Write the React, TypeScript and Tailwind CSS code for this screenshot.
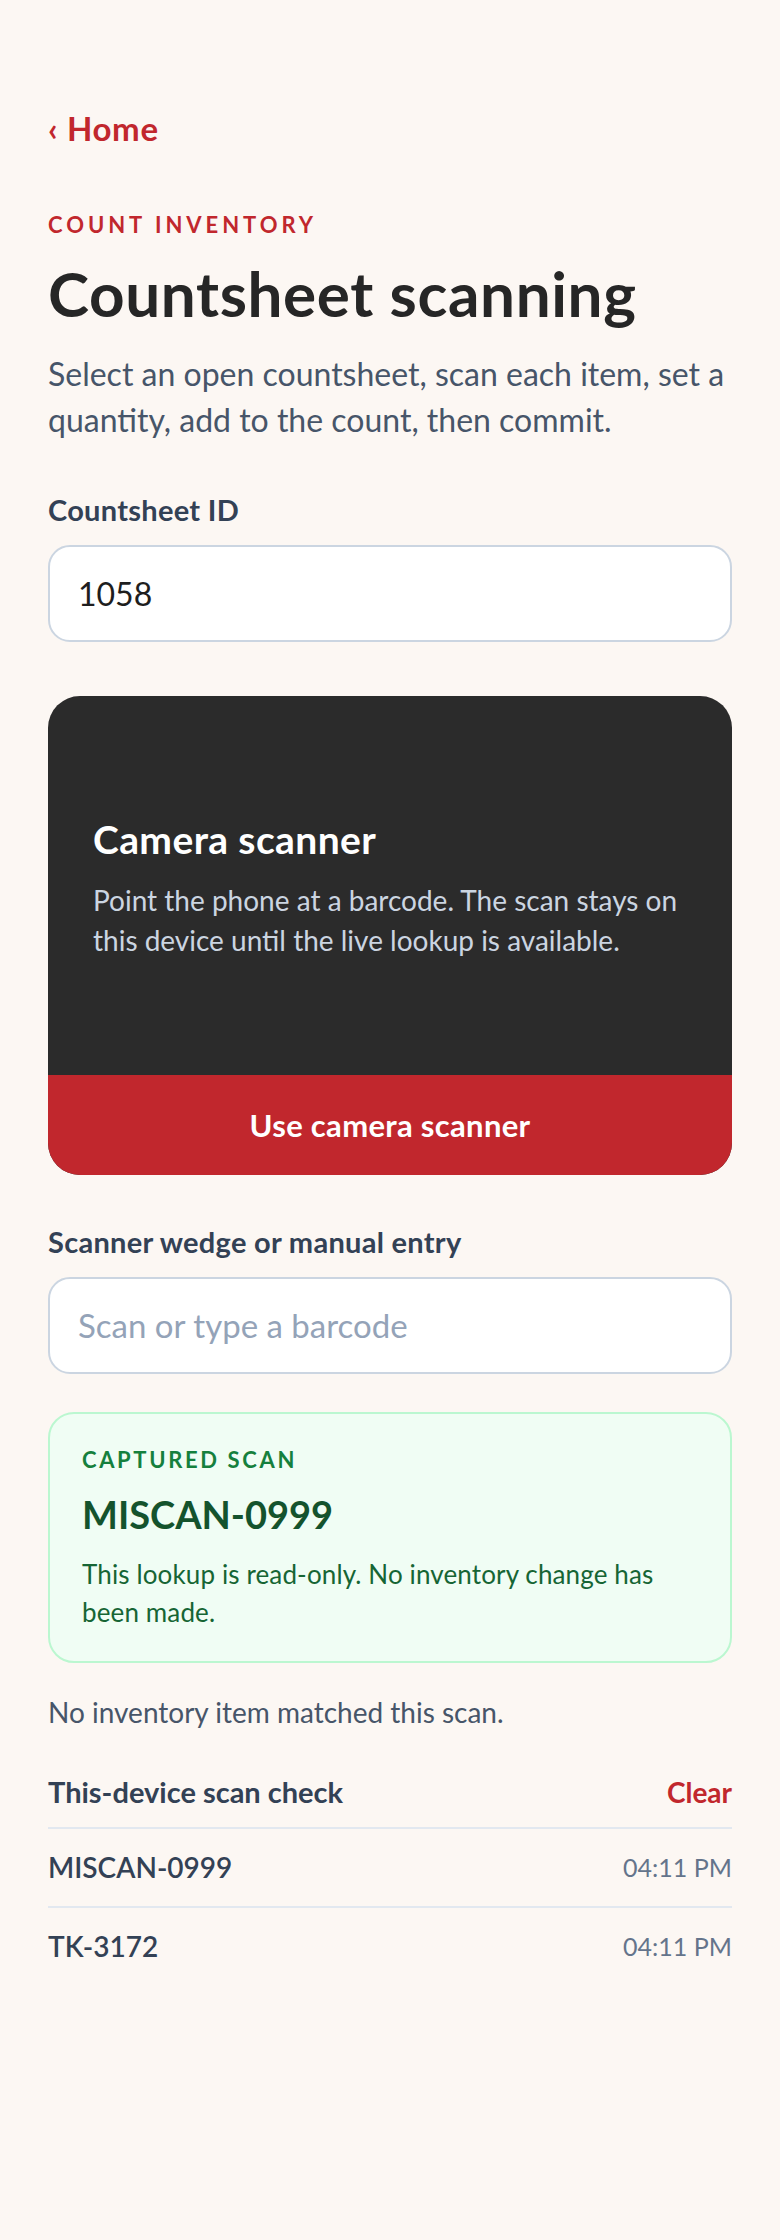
export default function App() {
  return (
    <div className="min-h-[2240px] bg-[#fcf7f3] px-[48px] pt-[106px] font-['Lato',sans-serif]">
      <a className="block text-[33px] leading-[44px] font-bold tracking-[0.02em] text-[#c1272d]">‹ Home</a>

      <div className="mt-[59px] text-[22px] leading-[32px] font-bold tracking-[0.18em] text-[#c1272d]">COUNT INVENTORY</div>
      <h1 className="mt-[16px] text-[62px] leading-[72px] font-bold tracking-[0.01em] text-[#262626]">Countsheet scanning</h1>
      <p className="mt-[22px] text-[32px] leading-[46px] text-[#475569]">
        Select an open countsheet, scan each item, set a quantity, add to the count, then commit.
      </p>

      <label className="mt-[47px] block text-[29px] leading-[40px] font-bold tracking-[0.01em] text-[#334155]">Countsheet ID</label>
      <div className="mt-[15px] flex h-[97px] items-center rounded-[22px] border-2 border-[#cbd5e1] bg-white px-[28px] text-[32px] text-[#1e1e1e]">
        1058
      </div>

      <div className="mt-[54px] overflow-hidden rounded-[32px] bg-[#2b2b2b]">
        <div className="h-[379px] px-[45px] pt-[119px]">
          <div className="text-[39px] leading-[48px] font-bold tracking-[0.01em] text-white">Camera scanner</div>
          <p className="mt-[17px] text-[28px] leading-[40px] text-[#cbd5e1]">
            Point the phone at a barcode. The scan stays on this device until the live lookup is available.
          </p>
        </div>
        <div className="flex h-[100px] items-center justify-center bg-[#c1272d] text-[31px] font-bold tracking-[0.01em] text-white">
          Use camera scanner
        </div>
      </div>

      <label className="mt-[47px] block text-[29px] leading-[40px] font-bold tracking-[0.01em] text-[#334155]">Scanner wedge or manual entry</label>
      <div className="mt-[15px] flex h-[97px] items-center rounded-[22px] border-2 border-[#cbd5e1] bg-white px-[28px] text-[33px] text-[#94a3b8]">
        Scan or type a barcode
      </div>

      <div className="mt-[38px] h-[251px] rounded-[26px] border-2 border-[#bbf7d0] bg-[#f0fdf4] px-[32px] pt-[30px]">
        <div className="text-[22px] leading-[32px] font-bold tracking-[0.12em] text-[#15803d]">CAPTURED SCAN</div>
        <div className="mt-[12px] text-[38px] leading-[52px] font-bold text-[#14532d]">MISCAN-0999</div>
        <p className="mt-[15px] text-[26px] leading-[38px] tracking-[0.005em] text-[#166534]">
          This lookup is read-only. No inventory change has been made.
        </p>
      </div>

      <p className="mt-[28px] text-[28px] leading-[42px] text-[#475569]">No inventory item matched this scan.</p>

      <div className="mt-[39px] flex items-center justify-between pb-[15px]">
        <div className="text-[29px] leading-[40px] font-bold text-[#334155]">This-device scan check</div>
        <div className="text-[28px] leading-[40px] font-bold text-[#c1272d]">Clear</div>
      </div>
      <div className="flex items-center justify-between border-t-2 border-[#e2e8f0] pt-[18px] pb-[19px]">
        <div className="text-[28px] leading-[40px] font-semibold text-[#334155]">MISCAN-0999</div>
        <div className="text-[25px] leading-[40px] text-[#64748b]">04:11 PM</div>
      </div>
      <div className="flex items-center justify-between border-t-2 border-[#e2e8f0] pt-[18px] pb-[19px]">
        <div className="text-[28px] leading-[40px] font-semibold text-[#334155]">TK-3172</div>
        <div className="text-[25px] leading-[40px] text-[#64748b]">04:11 PM</div>
      </div>
    </div>
  );
}
